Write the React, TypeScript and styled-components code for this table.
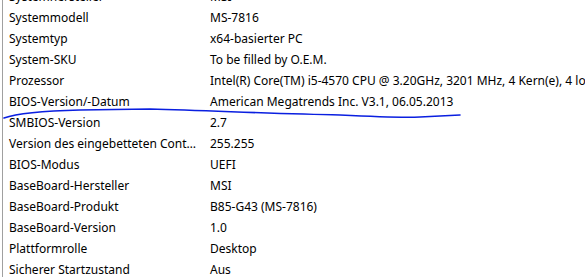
import styled, { createGlobalStyle } from "styled-components";

const GlobalStyle = createGlobalStyle`
  html, body {
    margin: 0;
    padding: 0;
    background: #ffffff;
  }
`;

const rows: [string, string][] = [
  ["Systemhersteller", "MSI"],
  ["Systemmodell", "MS-7816"],
  ["Systemtyp", "x64-basierter PC"],
  ["System-SKU", "To be filled by O.E.M."],
  ["Prozessor", "Intel(R) Core(TM) i5-4570 CPU @ 3.20GHz, 3201 MHz, 4 Kern(e), 4 logische(r) Prozessor(en)"],
  ["BIOS-Version/-Datum", "American Megatrends Inc. V3.1, 06.05.2013"],
  ["SMBIOS-Version", "2.7"],
  ["Version des eingebetteten Controllers", "255.255"],
  ["BIOS-Modus", "UEFI"],
  ["BaseBoard-Hersteller", "MSI"],
  ["BaseBoard-Produkt", "B85-G43 (MS-7816)"],
  ["BaseBoard-Version", "1.0"],
  ["Plattformrolle", "Desktop"],
  ["Sicherer Startzustand", "Aus"],
];

const Frame = styled.div`
  position: relative;
  width: 585px;
  height: 277px;
  overflow: hidden;
  background: #fff;
`;

const List = styled.div`
  margin-top: -14px;
  margin-left: 2px;
  border-left: 1px solid #a0a0a0;
  display: flex;
  flex-direction: column;
  min-height: 300px;
`;

const Row = styled.div`
  display: grid;
  grid-template-columns: 200px minmax(0, 1fr);
  height: 21px;
  align-items: center;
  font-family: "Segoe UI", "Noto Sans", sans-serif;
  font-size: 12px;
  color: #000;
  white-space: nowrap;
`;

const Label = styled.div`
  box-sizing: border-box;
  min-width: 0;
  padding: 0 6px 0 6px;
  overflow: hidden;
  text-overflow: ellipsis;
`;

const Value = styled.div`
  min-width: 0;
  padding-left: 7px;
  overflow: hidden;
`;

const Scribble = styled.svg`
  position: absolute;
  left: 0;
  top: 0;
  pointer-events: none;
`;

export default function App() {
  return (
    <Frame>
      <GlobalStyle />
      <List>
        {rows.map(([label, value]) => (
          <Row key={label}>
            <Label>{label}</Label>
            <Value>{value}</Value>
          </Row>
        ))}
      </List>
      <Scribble width="585" height="277" viewBox="0 0 585 277">
        <path
          d="M4 118 C 18 113 40 111 80 110 L 150 109 C 220 111 280 114 340 115 C 380 117 400 118 420 117 L 460 115"
          fill="none"
          stroke="#0a1fe0"
          strokeWidth="1.6"
          strokeLinecap="round"
        />
      </Scribble>
    </Frame>
  );
}
